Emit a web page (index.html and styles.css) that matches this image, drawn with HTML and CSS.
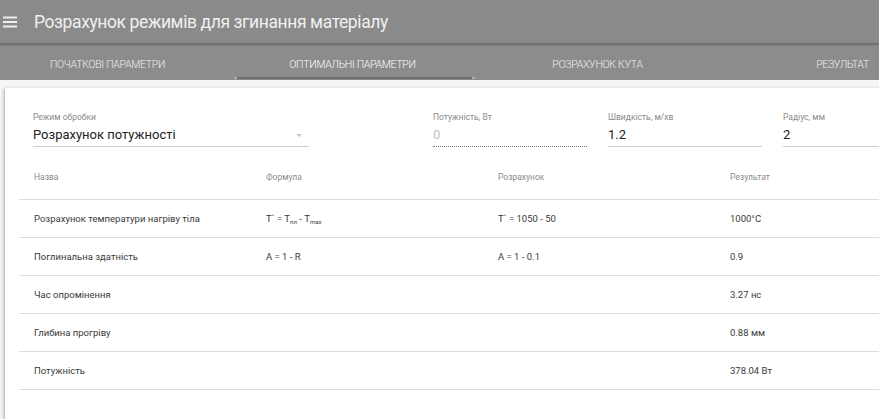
FILE: index.html
```html
<!DOCTYPE html>
<html lang="uk">
<head>
<meta charset="utf-8">
<title>Розрахунок режимів для згинання матеріалу</title>
<link rel="stylesheet" href="styles.css">
</head>
<body>
<header class="toolbar">
  <svg class="menu-icon" width="14" height="12" viewBox="0 0 14 12"><path d="M0 1.5h14M0 6h14M0 10.5h14" stroke="#eeeeee" stroke-width="1.8"/></svg>
  <h1 class="title">Розрахунок режимів для згинання матеріалу</h1>
</header>
<nav class="tabs">
  <div class="tab">Початкові параметри</div>
  <div class="tab tab-active">Оптимальні параметри</div>
  <div class="tab">Розрахунок кута</div>
  <div class="tab">Результат</div>
</nav>
<main class="page">
  <section class="card">
    <div class="form-row">
      <div class="field field-select">
        <label class="field-label">Режим обробки</label>
        <div class="field-value">Розрахунок потужності<span class="caret"></span></div>
      </div>
      <div class="field field-num field-disabled">
        <label class="field-label">Потужність, Вт</label>
        <div class="field-value">0</div>
      </div>
      <div class="field field-num">
        <label class="field-label">Швидкість, м/хв</label>
        <div class="field-value">1.2</div>
      </div>
      <div class="field field-num">
        <label class="field-label">Радіус, мм</label>
        <div class="field-value">2</div>
      </div>
    </div>
    <table class="calc-table">
      <thead>
        <tr><th>Назва</th><th>Формула</th><th>Розрахунок</th><th>Результат</th></tr>
      </thead>
      <tbody>
        <tr><td>Розрахунок температури нагріву тіла</td><td>T` = T<sub>пл</sub> - T<sub>max</sub></td><td>T` = 1050 - 50</td><td>1000°C</td></tr>
        <tr><td>Поглинальна здатність</td><td>A = 1 - R</td><td>A = 1 - 0.1</td><td>0.9</td></tr>
        <tr><td>Час опромінення</td><td></td><td></td><td>3.27 нс</td></tr>
        <tr><td>Глибина прогріву</td><td></td><td></td><td>0.88 мм</td></tr>
        <tr><td>Потужність</td><td></td><td></td><td>378.04 Вт</td></tr>
      </tbody>
    </table>
  </section>
</main>
</body>
</html>
```
FILE: styles.css
```css
html, body {
  margin: 0;
  padding: 0;
  overflow: hidden;
  background: #f5f5f5;
  font-family: Roboto, "Liberation Sans", Arial, sans-serif;
  color: #333;
}

.toolbar {
  height: 43px;
  background: #8a8a8a;
  display: flex;
  align-items: center;
  padding-left: 3px;
  box-shadow: 0 2px 2px rgba(0, 0, 0, 0.25);
  position: relative;
  z-index: 2;
}

.menu-icon {
  margin-right: 17px;
  margin-top: 1px;
  flex-shrink: 0;
}

.title {
  margin: 0;
  font-weight: 400;
  font-size: 17.5px;
  color: #f0f0f0;
  letter-spacing: -0.4px;
  white-space: nowrap;
}

.tabs {
  height: 37px;
  background: #8c8c8c;
  display: flex;
  margin-left: -15px;
  white-space: nowrap;
}

.tab {
  flex: 0 0 245px;
  display: flex;
  align-items: center;
  justify-content: center;
  padding-top: 6px;
  box-sizing: border-box;
  text-transform: uppercase;
  font-size: 10.5px;
  font-weight: 300;
  color: #ececec;
  letter-spacing: -0.3px;
  position: relative;
}

.tab-active {
  color: #fafafa;
}

.tab-active::after {
  content: "";
  position: absolute;
  left: 4px;
  right: 0;
  bottom: 1px;
  height: 2px;
  background: #6e6e6e;
  border-left: 3px solid #b0b0b0;
  border-right: 3px solid #b0b0b0;
}

.page {
  padding: 8px 0 0 5px;
}

.card {
  background: #fff;
  width: 960px;
  height: 340px;
  box-shadow: -1px 1px 3px rgba(0, 0, 0, 0.3);
  padding: 22px 14px 0 14px;
  box-sizing: border-box;
}

.form-row {
  display: flex;
  padding-left: 14px;
  margin-bottom: 9px;
}

.field {
  display: flex;
  flex-direction: column;
  flex-shrink: 0;
}

.field-select {
  width: 276px;
  margin-right: 124px;
}

.field-num {
  width: 154px;
  margin-right: 21px;
}

.field-label {
  font-size: 8.5px;
  color: #8a8a8a;
  height: 14px;
  line-height: 14px;
}

.field-value {
  font-size: 13px;
  color: #222;
  height: 22px;
  line-height: 22px;
  border-bottom: 1px solid #cfcfcf;
  position: relative;
}

.field-disabled .field-value {
  color: #c4c4c4;
  border-bottom: 1px dotted #777;
}

.caret {
  position: absolute;
  right: 7px;
  top: 10px;
  border-left: 3px solid transparent;
  border-right: 3px solid transparent;
  border-top: 3px solid #c8c8c8;
}

.calc-table {
  border-collapse: collapse;
  table-layout: fixed;
  width: 928px;
}

.calc-table th,
.calc-table td {
  width: 232px;
  text-align: left;
  padding: 0 0 0 15px;
  font-size: 9.5px;
  border-bottom: 1px solid #dedede;
  box-sizing: border-box;
}

.calc-table th {
  font-weight: 400;
  color: #8c8c8c;
  font-size: 8.5px;
  height: 43px;
  vertical-align: middle;
}

.calc-table td {
  color: #3a3a3a;
  height: 38px;
}

.calc-table sub {
  font-size: 6px;
  vertical-align: -2px;
  line-height: 0;
}
```
